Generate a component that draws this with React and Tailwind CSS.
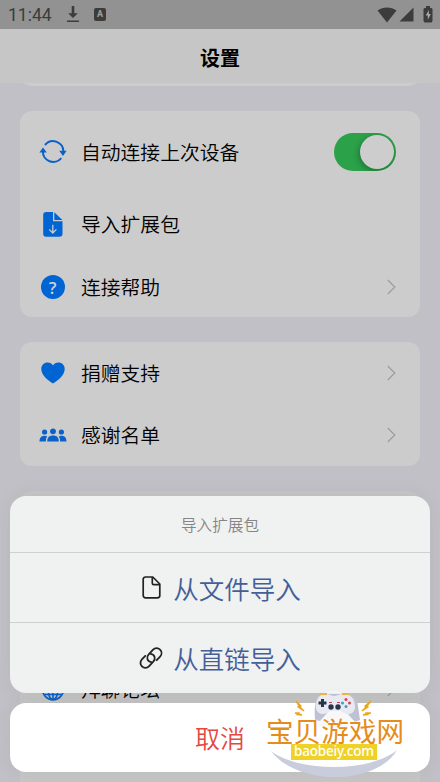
import React, { useState } from 'react';

const FONT = "font-['Noto_Sans_CJK_SC',sans-serif]";

const SyncIcon = () => (
  <svg width="28" height="24" viewBox="0 0 28 24" fill="none" stroke="#0a62c9" strokeWidth="2">
    <path d="M6 5A10.400 10.400 0 0 1 24.400 12" />
    <path d="M22.300 18.200A10.400 10.400 0 0 1 3.900 11" />
    <path d="M20.200 10.800h7.400L24 16zM.4 12.600h7.400L4 7.400z" fill="#0a62c9" stroke="none" />
  </svg>
);

const FileDownIcon = () => (
  <svg width="20" height="25" viewBox="0 0 20 25" fill="#0064d2">
    <path d="M3.200 0H10v9.200h9.500v12.600a3 3 0 0 1-3 3H3.200a3 3 0 0 1-3-3V3a3 3 0 0 1 3-3z" />
    <path d="M11.300.2L19.400 8h-8.100z" />
    <path d="M9.800 12.800v8M6.200 17.400l3.600 3.600 3.600-3.600" fill="none" stroke="#ccc" strokeWidth="1.300" />
  </svg>
);

const HelpIcon = () => (
  <div className="flex h-6 w-6 items-center justify-center rounded-full bg-[#0064d2] font-['Open_Sans',sans-serif] text-[17px] font-semibold leading-none text-[#d2d2d2]">?</div>
);

const HeartIcon = () => (
  <svg width="24" height="22" viewBox="0 0 24 22" fill="#0064d2">
    <path d="M12 21.600C7 18.300.3 13 .3 6.900.3 3 3.200.4 6.500.4 9 .4 11 1.600 12 3.500 13 1.600 15 .4 17.500.4 20.800.4 23.700 3 23.700 6.900 23.700 13 17 18.300 12 21.600z" />
  </svg>
);

const GroupIcon = () => (
  <svg width="28" height="14" viewBox="0 0 28 14" fill="#0a62c9">
    <circle cx="14" cy="3.300" r="2.900" />
    <circle cx="5.600" cy="4" r="2.600" />
    <circle cx="22.400" cy="4" r="2.600" />
    <path d="M8.200 13.500c0-4 2-6 5.800-6s5.800 2 5.800 6z" />
    <path d="M.5 13.500C.5 9.800 2.300 7.700 5.500 7.700c1 0 2 .2 2.700.7C7.200 9.700 6.800 11.500 6.900 13.500zM27.500 13.500c0-3.700-1.800-5.800-5-5.800-1 0-2 .2-2.700.7 1 1.300 1.400 3.100 1.300 5.100z" />
  </svg>
);

const GlobeIcon = () => (
  <svg width="24" height="24" viewBox="0 0 24 24" fill="none" stroke="#0a62c9" strokeWidth="1.600">
    <circle cx="12" cy="12" r="10.700" />
    <ellipse cx="12" cy="12" rx="5" ry="10.700" />
    <path d="M12 1v22M1.300 12h21.400M3 6.500h18M3 17.500h18" />
  </svg>
);

const Chevron = () => (
  <svg width="9" height="16" viewBox="0 0 9 16" fill="none" stroke="#9d9d9d" strokeWidth="1.200">
    <path d="M.8 1l7 7-7 7" />
  </svg>
);

const FileIcon = () => (
  <svg width="19" height="23" viewBox="0 0 19 23" fill="none" stroke="#222" strokeWidth="1.700" strokeLinejoin="round">
    <path d="M3.500 1h7.300L17.800 8v11.500a2.300 2.300 0 0 1-2.300 2.300h-12a2.300 2.300 0 0 1-2.300-2.300V3.300A2.300 2.300 0 0 1 3.500 1z" />
    <path d="M10.300 1v6.200a1.400 1.400 0 0 0 1.400 1.400h6" />
  </svg>
);

// two interlocked oval links, tilted 45deg
const LinkIcon = () => (
  <svg width="24" height="24" viewBox="0 0 24 24" fill="none" stroke="#222" strokeWidth="1.800" strokeLinecap="round">
    <path d="M12.200 16.200c-4-.7-5.300-5-2.500-7.900l4.400-4.600a4.900 4.900 0 0 1 7 6.900l-3.400 3.600" />
    <path d="M11.800 7.800c4 .7 5.300 5 2.500 7.900l-4.400 4.600a4.900 4.900 0 0 1-7-6.900l3.400-3.600" />
  </svg>
);

const StatusBar = () => (
  <div className="flex h-[29px] shrink-0 items-center bg-[#929292] pl-2 pr-[7px] text-[#3c3c3c]">
    <span className="w-[59px] pt-0.5 font-[Roboto,sans-serif] text-[17.500px] leading-none">11:44</span>
    <svg width="12" height="17" viewBox="0 0 12 17" fill="currentColor">
      <path d="M4.700 0h2.600v7.300h3.500L6 12 1.200 7.300h3.500zM0 14.500h12V16H0z" />
    </svg>
    <div className="ml-[15px] flex h-[13px] w-3 items-center justify-center rounded-[2px] bg-[#3c3c3c] font-[Roboto,sans-serif] text-[9px] font-bold leading-none text-[#a0a0a0]">A</div>
    <div className="ml-auto flex items-center">
      <svg width="20" height="16" viewBox="0 0 20 16" fill="currentColor"><path d="M.5 3.500C6-.6 14-.6 19.500 3.500L10 15.500z" /></svg>
      <svg className="ml-[2px]" width="15" height="15" viewBox="0 0 15 15" fill="currentColor"><path d="M14.500.5v14H.5z" /></svg>
      <svg className="ml-[9px]" width="10" height="17" viewBox="0 0 10 17" fill="currentColor">
        <path d="M3 0h4v2h1.500L9.500 3v12l-1 1.500h-7L.5 15V3l1-1H3z" />
        <path d="M5.800 4L2.800 9.500h2v4.300l3-5.800h-2z" fill="#aaa" />
      </svg>
    </div>
  </div>
);

const Row = ({ icon: Icon, label, chevron, tall, children }) => (
  <div className={`flex items-center pr-6 ${tall ? 'h-[82px]' : 'h-[62px]'}`}>
    <div className="flex w-[65px] shrink-0 justify-center"><Icon /></div>
    <span className="-ml-1 flex-1 text-[19.800px] font-[350] leading-none text-black">{label}</span>
    {chevron && <Chevron />}
    {children}
  </div>
);

const Switch = ({ on, onChange }) => (
  <button onClick={() => onChange(!on)} className={`flex h-[38px] w-[62px] items-center overflow-hidden rounded-full p-[2px] ${on ? 'justify-end bg-[#2ba149]' : 'justify-start bg-[#aaa]'}`}>
    <span className="h-[34px] w-[34px] rounded-full bg-[#cdcdcd] shadow-[-1px_2px_6px_rgba(0,0,0,0.3)]" />
  </button>
);

const Watermark = () => (
  <div className="pointer-events-none absolute left-[264px] top-[690px] h-[92px] w-[142px]">
    <svg className="absolute left-0 top-0" width="142" height="92" viewBox="0 0 142 92">
      <path d="M7 61C34 82 106 83 133 60 112 96 33 96 7 61z" fill="#c9ccda" />
      <circle cx="70" cy="21" r="20" fill="#f6f6f7" opacity=".8" />
      <path d="M51 30C50 15 52 5 58 4h24c7 0 11 3 12 12l2 14-5 2-9-10c-2-2-3-2-5-2h-8c-2 0-3 0-5 2l-8 9-5-1z" fill="#bfc2d2" />
      <path d="M52 17C52 8 56 4 62 4c4 0 5 2 8 2s5-2 9-2c7 0 12 4 12 13 0 8-9 9-14 4H66c-5 5-14 4-14-4z" fill="#e9eaf1" />
      <path d="M56 4h7M78 4h7" stroke="#e6b649" strokeWidth="1.800" />
      <path d="M58.500 9v8M54.500 13h8" stroke="#26354b" strokeWidth="3" />
      <circle cx="67" cy="17" r="2.700" fill="#26354b" />
      <circle cx="74" cy="17" r="2.700" fill="#26354b" />
      <path d="M65 12.500h3M73 12.500h3" stroke="#d13a58" strokeWidth="1.200" />
      <circle cx="82" cy="9.500" r="1.500" fill="#d83f50" />
      <circle cx="82" cy="16.500" r="1.500" fill="#3aa3b8" />
      <circle cx="78.500" cy="13" r="1.500" fill="#3aa3b8" />
      <circle cx="85.500" cy="13" r="1.500" fill="#d83f50" />
      <path d="M32 11l5 5-1 1 4 4-6-4 1-1zM31 23l4 0v1l3 1-5-.5v-1zM107 11l-6 5 1 1-4 4 6-4-1-1zM107 23l-5 0v1l-3 1 5-.5v-1z" fill="#f1ae25" stroke="#eba520" strokeWidth="1.400" />
    </svg>
    <div className="absolute left-[2px] top-[26px] h-7 whitespace-nowrap text-[27.600px] font-normal leading-[28px] text-[#e58d1c] [text-shadow:0_0_2px_white]">宝贝游戏网</div>
    <div className="absolute left-[27px] top-[54px] flex h-4 w-[86px] items-center justify-center bg-[#f0d227] font-['Noto_Sans',sans-serif] text-[13.500px] font-medium leading-none tracking-[-0.200px] text-white">baobeiy.com</div>
  </div>
);

const actions = [
  { label: '从文件导入', icon: FileIcon },
  { label: '从直链导入', icon: LinkIcon },
];

export default function App() {
  const [auto, setAuto] = useState(true);

  return (
    <div className={`relative flex h-[782px] w-[440px] flex-col overflow-hidden bg-[#c1c0c6] ${FONT}`}>
      <StatusBar />
      <header className="flex h-[54px] shrink-0 items-center justify-center bg-[#c6c6c6] pt-1 text-[20px] font-bold leading-none text-black">设置</header>

      <main className="flex shrink-0 flex-col px-5">
        <div className="h-[3px] [clip-path:polygon(3px_0,397px_0,390px_100%,10px_100%)] bg-[#cccccc]" />
        <section className="mt-[25px] h-[206px] rounded-[12px] bg-[#cccccc]">
          <Row icon={SyncIcon} label="自动连接上次设备" tall>
            <Switch on={auto} onChange={setAuto} />
          </Row>
          <Row icon={FileDownIcon} label="导入扩展包" />
          <div className="pt-px">
            <Row icon={HelpIcon} label="连接帮助" chevron />
          </div>
        </section>
        <section className="mt-[25px] rounded-[12px] bg-[#cccccc]">
          <Row icon={HeartIcon} label="捐赠支持" chevron />
          <Row icon={GroupIcon} label="感谢名单" chevron />
        </section>
        <section className="mt-[25px] h-[300px] rounded-[12px] bg-[#c6c6c6] pt-[167px]">
          <Row icon={GlobeIcon} label="拜聊论坛" chevron />
        </section>
      </main>

      {/* action sheet */}
      <div className="absolute inset-x-[10px] bottom-[10px] flex flex-col gap-[10px]">
        <div className="h-[197px] overflow-hidden rounded-[16px] bg-[#f0f1f1] shadow-[0_0_20px_rgba(0,0,0,0.06)]">
          <div className="flex h-[57px] items-center justify-center border-b border-[#cdd1d0] pt-0.5 text-[15.600px] font-[350] leading-none text-[#858585]">导入扩展包</div>
          {actions.map(({ label, icon: Icon }, i) => (
            <button key={label} className={`flex h-[70px] w-full items-center justify-center gap-2.5 text-[25.500px] font-[350] leading-none text-[#445f98] ${i === 0 ? 'border-b border-[#cdd1d0]' : ''}`}>
              <span className="flex w-6 justify-center"><Icon /></span>
              <span>{label}</span>
            </button>
          ))}
        </div>
        <button className="flex h-[69px] items-center justify-center rounded-[16px] bg-white text-[25px] font-[350] leading-none text-[#e5483f] shadow-[0_0_20px_rgba(0,0,0,0.06)]">取消</button>
      </div>

      <Watermark />
    </div>
  );
}
